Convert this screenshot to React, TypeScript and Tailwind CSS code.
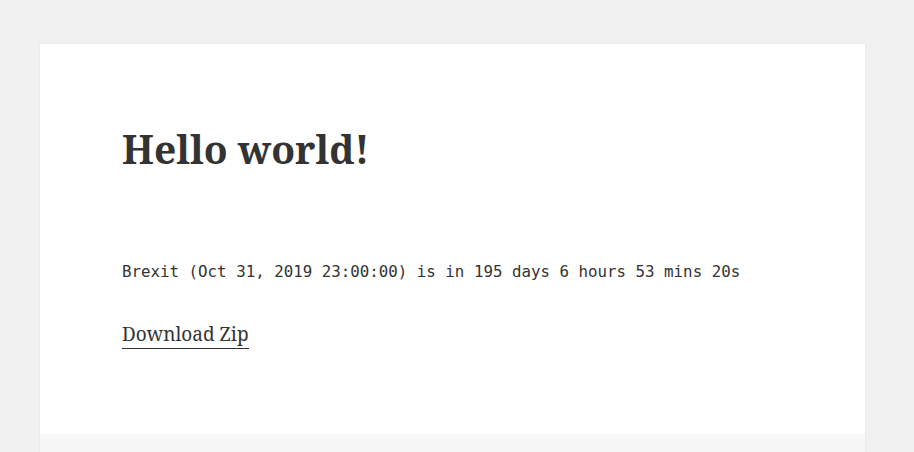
export default function App() {
  return (
    <div className="min-h-screen bg-[#f1f1f1] pt-[44px] pl-[40px]">
      <div className="w-[825px] bg-white shadow-[0_0_1px_rgba(0,0,0,0.15)]">
        <article className="pl-[82px] pr-[82px] pt-[80px] pb-[86px] text-[#333]">
          <h1 className="font-['Noto_Serif',serif] text-[39px] font-bold leading-[50px]">
            Hello world!
          </h1>
          <p className="mt-[86px] font-['DejaVu_Sans_Mono',monospace] text-[15.8px] leading-[24px]">
            Brexit (Oct 31, 2019 23:00:00) is in 195 days 6 hours 53 mins 20s
          </p>
          <p className="mt-[36px] font-['Noto_Serif',serif] text-[19px] leading-[28px]">
            <a href="#" className="border-b border-[#333] pb-[1px] text-[#333]">
              Download Zip
            </a>
          </p>
        </article>
        <footer className="h-[40px] bg-[#f7f7f7]" />
      </div>
    </div>
  );
}
